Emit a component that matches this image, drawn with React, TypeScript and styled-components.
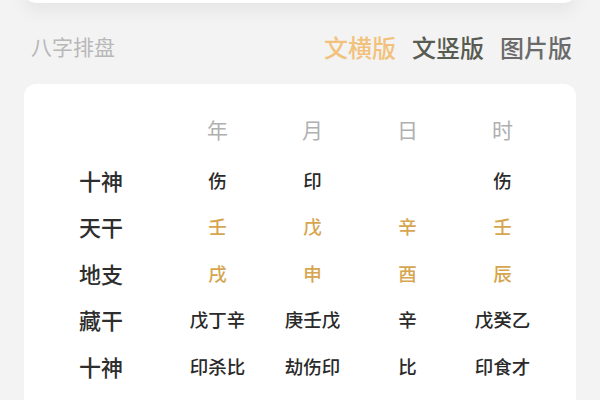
import React from "react";
import styled, { createGlobalStyle } from "styled-components";

const Global = createGlobalStyle`
  html, body { margin: 0; padding: 0; background: #f3f3f3; }
  body { font-family: "Noto Sans CJK SC", "Noto Sans", sans-serif; }
`;

const Page = styled.div`
  width: 600px;
  height: 400px;
  overflow: hidden;
  display: flex;
  flex-direction: column;
`;

const TopCard = styled.div`
  margin: -20px 24px 0;
  height: 23px;
  background: #fff;
  border-radius: 0 0 12px 12px;
  box-shadow: 0 8px 18px rgba(0, 0, 0, 0.06);
`;

const Header = styled.div`
  display: flex;
  align-items: center;
  justify-content: space-between;
  margin-top: 14px;
  padding: 0 28px 0 31px;
  height: 58px;
`;

const Title = styled.div`
  font-size: 21px;
  color: #b8b8b8;
`;

const Tabs = styled.div`
  display: flex;
  gap: 16px;
`;

const Tab = styled.div<{ $color: string }>`
  font-size: 24px;
  font-weight: 500;
  color: ${(p) => p.$color};
`;

const Card = styled.div`
  margin: 9px 24px 0;
  background: #fff;
  border-radius: 12px 12px 0 0;
  padding-top: 26px;
  flex: 1;
`;

const Grid = styled.div`
  display: grid;
  grid-template-columns: 146px repeat(4, 95px);
  grid-auto-rows: 46.5px;
`;

const HeadCell = styled.div`
  display: flex;
  align-items: center;
  justify-content: center;
  font-size: 21px;
  color: #b0b0b0;
  margin-bottom: 8px;
`;

const Label = styled.div`
  display: flex;
  align-items: center;
  padding-left: 55px;
  font-size: 22px;
  font-weight: 500;
  color: #2e2e2e;
`;

const Cell = styled.div<{ $gold?: boolean }>`
  display: flex;
  align-items: center;
  justify-content: center;
  font-size: 18.5px;
  font-weight: 500;
  color: ${(p) => (p.$gold ? "#d6a54f" : "#2a2a2a")};
`;

const Spacer = styled.div`
  margin-bottom: 8px;
`;

const rows: { label: string; vals: string[]; gold?: boolean }[] = [
  { label: "十神", vals: ["伤", "印", "", "伤"] },
  { label: "天干", vals: ["壬", "戊", "辛", "壬"], gold: true },
  { label: "地支", vals: ["戌", "申", "酉", "辰"], gold: true },
  { label: "藏干", vals: ["戊丁辛", "庚壬戊", "辛", "戊癸乙"] },
  { label: "十神", vals: ["印杀比", "劫伤印", "比", "印食才"] },
];

export default function App() {
  return (
    <Page>
      <Global />
      <TopCard />
      <Header>
        <Title>八字排盘</Title>
        <Tabs>
          <Tab $color="#f2c27c">文横版</Tab>
          <Tab $color="#585b50">文竖版</Tab>
          <Tab $color="#6a6a6a">图片版</Tab>
        </Tabs>
      </Header>
      <Card>
        <Grid>
          <Spacer />
          {["年", "月", "日", "时"].map((h) => (
            <HeadCell key={h}>{h}</HeadCell>
          ))}
          {rows.map((r, i) => (
            <React.Fragment key={i}>
              <Label>{r.label}</Label>
              {r.vals.map((v, j) => (
                <Cell key={j} $gold={r.gold}>
                  {v}
                </Cell>
              ))}
            </React.Fragment>
          ))}
        </Grid>
      </Card>
    </Page>
  );
}
